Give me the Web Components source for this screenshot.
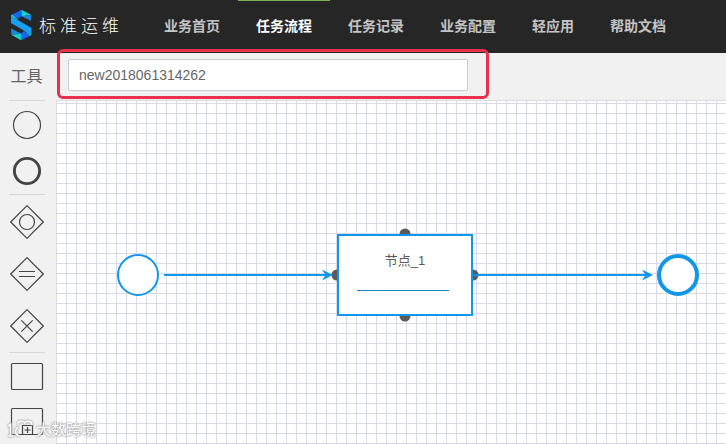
<!DOCTYPE html>
<html lang="zh-CN">
<head>
<meta charset="utf-8">
<title>标准运维</title>
<style>
  body {
    margin: 0;
    overflow: hidden;
    font-family: "Liberation Sans", "Noto Sans CJK SC", sans-serif;
  }
</style>
</head>
<body>
<flow-app></flow-app>

<script>
class NavTab extends HTMLElement {
  constructor() {
    super();
    this.attachShadow({ mode: 'open' });
    this.shadowRoot.innerHTML = `
      <style>
        :host {
          display: block;
          box-sizing: border-box;
          height: 53px;
          padding: 0 18px;
          border-top: 1px solid transparent;
          color: #c4c4c4;
          font-size: 14px;
          font-weight: bold;
          line-height: 50px;
          white-space: nowrap;
        }

        :host([active]) {
          border-top-color: #7fb35a;
          color: #fff;
        }
      </style>
      <slot></slot>
    `;
  }
}

class AppHeader extends HTMLElement {
  constructor() {
    super();
    this.attachShadow({ mode: 'open' });
    this.shadowRoot.innerHTML = `
      <style>
        :host {
          display: flex;
          height: 53px;
          background: #262626;
        }

        .brand {
          display: flex;
          box-sizing: border-box;
          width: 146px;
          padding-left: 11px;
          color: #fff;
        }

        svg {
          margin-top: 9px;
          flex: none;
        }

        .name {
          margin-left: 7px;
          font-size: 17px;
          font-weight: 300;
          letter-spacing: 4px;
          line-height: 53px;
          white-space: nowrap;
        }
      </style>
      <div class="brand">
        <svg width="21" height="32" viewBox="0 0 21 32">
          <path fill="#1565f0" d="M1.5 5.5 10.5 .8V7L7 9.5Z"/>
          <path fill="#15d1c4" d="M10.5 .8 20 5.7 10.5 7.5Z"/>
          <path fill="#1688dd" d="M20 5.7V11.8L10.5 7.5Z"/>
          <path fill="#17c3cf" d="M0 6.3 1.5 5.5 8 11 0 8Z"/>
          <path fill="#189ff2" d="M0 7 20.5 19V26L0 14Z"/>
          <path fill="#1688dd" d="M0 19.5 10 24.5 .5 26Z"/>
          <path fill="#15d1c4" d="M.5 26 10 24.5V31.2Z"/>
          <path fill="#1565f0" d="M10 24.5 13 22 19 27 10 31.2Z"/>
          <path fill="#17c3cf" d="M13 21.5 20.5 26 19 27Z"/>
        </svg>
        <span class="name"><slot name="brand"></slot></span>
      </div>
      <slot></slot>
    `;
  }
}

class ToolItem extends HTMLElement {
  constructor() {
    super();
    const shapes = {
      start: '<circle cx="17" cy="17" r="13.5"/>',
      end: '<circle cx="17" cy="17" r="12.6" stroke-width="2.9"/>',
      converge: '<path d="M17 .7 33.3 17 17 33.3 .7 17Z"/><circle cx="17" cy="17" r="7.5"/>',
      parallel: '<path d="M17 .7 33.3 17 17 33.3 .7 17ZM9 14.5H25M9 19.5H25"/>',
      branch: '<path d="M17 .7 33.3 17 17 33.3 .7 17ZM11.3 11.3 22.7 22.7M22.7 11.3 11.3 22.7"/>',
      task: '<rect x="1.5" y="3.5" width="31" height="26" rx="1"/>',
      subflow: '<rect x="1.5" y="3.5" width="31" height="26" rx="1"/><path d="M12.5 29.5V20.5H22.5V29.5M17.5 22V28M14.5 25H20.5"/>'
    };
    this.attachShadow({ mode: 'open' });
    this.shadowRoot.innerHTML = `
      <style>
        :host {
          display: block;
          width: 34px;
          height: 34px;
          flex: none;
        }

        svg {
          display: block;
          fill: none;
          stroke: #444;
          stroke-width: 1.2;
        }
      </style>
      <svg width="34" height="34">${shapes[this.getAttribute('type')]}</svg>
    `;
  }
}

class ToolPalette extends HTMLElement {
  constructor() {
    super();
    this.attachShadow({ mode: 'open' });
    this.shadowRoot.innerHTML = `
      <style>
        :host {
          display: flex;
          flex-direction: column;
          align-items: center;
          box-sizing: border-box;
          width: 57px;
          padding-right: 3px;
          border-right: 1px solid #dcdcdc;
          background: #f1f1f1;
          overflow: hidden;
          flex: none;
        }

        h2 {
          margin: 0;
          height: 47px;
          color: #606266;
          font-size: 16px;
          font-weight: 400;
          line-height: 48px;
        }

        .group {
          display: flex;
          flex-direction: column;
          align-items: center;
          box-sizing: border-box;
          width: 36px;
          border-top: 1px solid #d6d6d6;
          flex: none;
        }

        .events {
          height: 94px;
          padding-top: 7px;
          gap: 12px;
        }

        .gateways {
          height: 158px;
          padding-top: 10px;
          gap: 18px;
        }

        .tasks {
          padding-top: 7px;
          gap: 11px;
        }
      </style>
      <h2>工具</h2>
      <div class="group events">
        <tool-item type="start"></tool-item>
        <tool-item type="end"></tool-item>
      </div>
      <div class="group gateways">
        <tool-item type="converge"></tool-item>
        <tool-item type="parallel"></tool-item>
        <tool-item type="branch"></tool-item>
      </div>
      <div class="group tasks">
        <tool-item type="task"></tool-item>
        <tool-item type="subflow"></tool-item>
      </div>
    `;
  }
}

class NameBar extends HTMLElement {
  constructor() {
    super();
    this.attachShadow({ mode: 'open' });
    this.shadowRoot.innerHTML = `
      <style>
        :host {
          display: block;
          position: relative;
          box-sizing: border-box;
          height: 48px;
          padding: 6px 11px 0;
          border-bottom: 1px solid #dcdcdc;
          background: #f1f1f1;
        }

        .field {
          box-sizing: border-box;
          width: 400px;
          height: 32px;
          padding: 0 10px;
          border: 1px solid #c3cdd3;
          border-radius: 2px;
          background: #fff;
          color: #666;
          font-size: 14px;
          line-height: 31px;
        }

        .outline {
          position: absolute;
          z-index: 2;
          left: 1px;
          top: -4px;
          box-sizing: border-box;
          width: 432px;
          height: 50px;
          border: 3px solid #e8304c;
          border-radius: 6px;
        }
      </style>
      <div class="field"><slot></slot></div>
      <div class="outline"></div>
    `;
  }
}

class FlowNode extends HTMLElement {
  constructor() {
    super();
    this.attachShadow({ mode: 'open' });
    this.shadowRoot.innerHTML = `
      <style>
        :host {
          position: absolute;
          display: block;
          box-sizing: border-box;
          width: 136px;
          height: 82px;
          border: 2px solid #1097ea;
          background: #fff;
          color: #5a5a5a;
          font-size: 13px;
          text-align: center;
        }

        :host([type="start"]),
        :host([type="end"]) {
          width: 42px;
          height: 42px;
          border-radius: 50%;
        }

        :host([type="end"]) {
          border-width: 4px;
        }

        .label {
          padding-top: 15px;
          line-height: 20px;
        }

        .line {
          height: 1px;
          margin: 19px 22px 0 18px;
          background: #1686c8;
        }
      </style>
    `;
    if (this.getAttribute('type') === 'task') {
      this.shadowRoot.innerHTML += `
        <div class="label"><slot></slot></div>
        <div class="line"></div>
      `;
    }
  }
}

class FlowCanvas extends HTMLElement {
  constructor() {
    super();
    this.attachShadow({ mode: 'open' });
    this.shadowRoot.innerHTML = `
      <style>
        :host {
          display: block;
          position: relative;
          flex: 1;
          background:
            linear-gradient(#d8d9ea 1px, transparent 1px) 0 2px / 10px 10px,
            linear-gradient(90deg, #d8d9ea 1px, transparent 1px) 9px 0 / 10px 10px,
            #fff;
        }

        svg {
          position: absolute;
          left: 0;
          top: 0;
        }
      </style>
      <svg width="669" height="343">
        <g fill="#5a5a5a">
          <circle cx="348" cy="133" r="5.5"/>
          <circle cx="348" cy="215" r="5.5"/>
          <circle cx="280" cy="174" r="5.5"/>
          <circle cx="416" cy="174" r="5.5"/>
        </g>
        <g fill="none" stroke="#1097ea" stroke-width="2">
          <path d="M107 174H272M417 174H592"/>
        </g>
        <g fill="#1097ea">
          <path d="M276 174 265 168.5 268.5 174 265 179.5Z"/>
          <path d="M596 174 585 168.5 588.5 174 585 179.5Z"/>
        </g>
      </svg>
      <slot></slot>
    `;
  }
}

class WaterMark extends HTMLElement {
  constructor() {
    super();
    this.attachShadow({ mode: 'open' });
    this.shadowRoot.innerHTML = `
      <style>
        :host {
          position: absolute;
          z-index: 3;
          left: 7px;
          top: 419px;
          display: flex;
          align-items: center;
          gap: 3px;
          color: #fff;
          font-size: 15px;
          line-height: 21px;
          filter: drop-shadow(0 0 .8px #999) drop-shadow(0 0 .5px #bbb);
        }

        svg {
          fill: none;
          stroke: #fff;
          stroke-width: 1.6;
        }
      </style>
      <svg width="26" height="19" viewBox="0 0 26 19">
        <path d="M1 6 3.5 4.5V16M1.5 16H6M11 7A5 5 0 0 0 12 16M11 5C10 1 16 0 17.5 3C19 0 25 1 25 5"/>
      </svg>
      <slot></slot>
    `;
  }
}

class FlowApp extends HTMLElement {
  constructor() {
    super();
    this.attachShadow({ mode: 'open' });
    this.shadowRoot.innerHTML = `
      <style>
        :host {
          display: flex;
          flex-direction: column;
          position: relative;
          width: 726px;
          height: 444px;
          overflow: hidden;
        }

        .body {
          display: flex;
          flex: 1;
          min-height: 0;
        }

        .main {
          display: flex;
          flex-direction: column;
          flex: 1;
        }

        name-bar {
          margin-left: -1px;
          padding-left: 12px;
        }
      </style>
      <app-header>
        <span slot="brand">标准运维</span>
        <nav-tab>业务首页</nav-tab>
        <nav-tab active>任务流程</nav-tab>
        <nav-tab>任务记录</nav-tab>
        <nav-tab>业务配置</nav-tab>
        <nav-tab>轻应用</nav-tab>
        <nav-tab>帮助文档</nav-tab>
      </app-header>
      <div class="body">
        <tool-palette></tool-palette>
        <div class="main">
          <name-bar>new2018061314262</name-bar>
          <flow-canvas>
            <flow-node type="start" style="left: 60px; top: 153px"></flow-node>
            <flow-node type="task" style="left: 280px; top: 133px">节点_1</flow-node>
            <flow-node type="end" style="left: 600px; top: 153px"></flow-node>
          </flow-canvas>
        </div>
      </div>
      <water-mark>大数跨境</water-mark>
    `;
  }
}

customElements.define('nav-tab', NavTab);
customElements.define('app-header', AppHeader);
customElements.define('tool-item', ToolItem);
customElements.define('tool-palette', ToolPalette);
customElements.define('name-bar', NameBar);
customElements.define('flow-node', FlowNode);
customElements.define('flow-canvas', FlowCanvas);
customElements.define('water-mark', WaterMark);
customElements.define('flow-app', FlowApp);
</script>
</body>
</html>
